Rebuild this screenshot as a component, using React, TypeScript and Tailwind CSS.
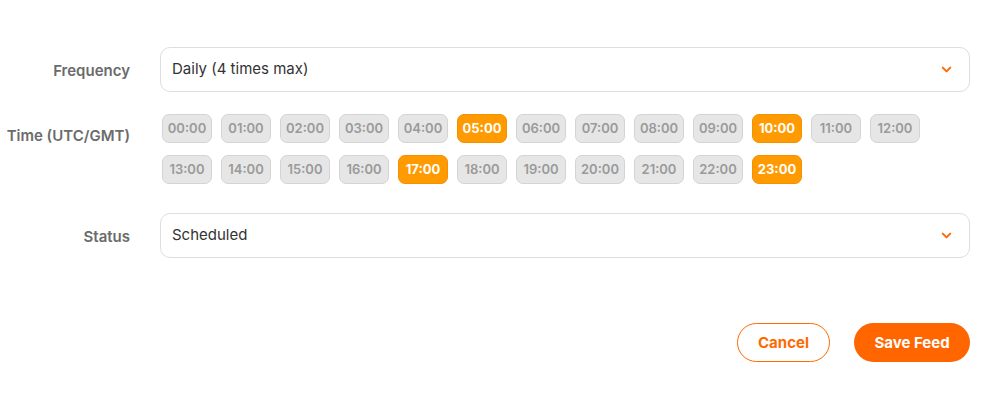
import { ChevronDown } from 'lucide-react';

const hours = Array.from({ length: 24 }, (_, i) => `${String(i).padStart(2, '0')}:00`);
const selected = ['05:00', '10:00', '17:00', '23:00'];

function Select({ value }: { value: string }) {
  return (
    <div className="ml-[30px] flex h-[45px] flex-1 items-center justify-between rounded-[10px] border border-[#dedede] bg-white pl-[11px] pr-[15px]">
      <span className="text-[15px] text-[#333333]">{value}</span>
      <ChevronDown className="h-[15px] w-[15px] text-[#ff6a00]" strokeWidth={3.2} />
    </div>
  );
}

function Label({ children, className = '' }: { children: string; className?: string }) {
  return (
    <div className={`w-[130px] shrink-0 text-right text-[15px] font-semibold text-[#6b6b6b] ${className}`}>
      {children}
    </div>
  );
}

export default function App() {
  return (
    <div className="min-h-[402px] bg-white pr-[36px] pt-[47px] font-['Inter',sans-serif]">
      <div className="flex items-center">
        <Label className="pt-[4px]">Frequency</Label>
        <Select value="Daily (4 times max)" />
      </div>

      <div className="mt-[22px] flex items-start">
        <Label className="mt-[11px]">Time (UTC/GMT)</Label>
        <div className="ml-[30px] flex flex-1 flex-wrap gap-x-[9px] gap-y-[12px] pl-[2px]">
          {hours.map((h) => {
            const on = selected.includes(h);
            return (
              <div
                key={h}
                className={
                  on
                    ? 'flex h-[29px] w-[50px] items-center justify-center rounded-[7px] border border-[#f29200] bg-[#ff9a00] text-[13px] font-bold text-white'
                    : 'flex h-[29px] w-[50px] items-center justify-center rounded-[7px] border border-[#d4d4d4] bg-[#e6e6e6] text-[13px] font-semibold text-[#9a9a9a]'
                }
              >
                {h}
              </div>
            );
          })}
        </div>
      </div>

      <div className="mt-[29px] flex items-center">
        <Label className="pt-[4px]">Status</Label>
        <Select value="Scheduled" />
      </div>

      <div className="mt-[65px] flex justify-end gap-[24px]">
        <button className="h-[39px] w-[93px] rounded-full border border-[#ff6a00] bg-white pt-[2px] text-[15px] font-bold text-[#ff6a00]">
          Cancel
        </button>
        <button className="h-[39px] w-[116px] rounded-full bg-[#ff6600] pt-[2px] text-[15px] font-bold text-white">
          Save Feed
        </button>
      </div>
    </div>
  );
}
